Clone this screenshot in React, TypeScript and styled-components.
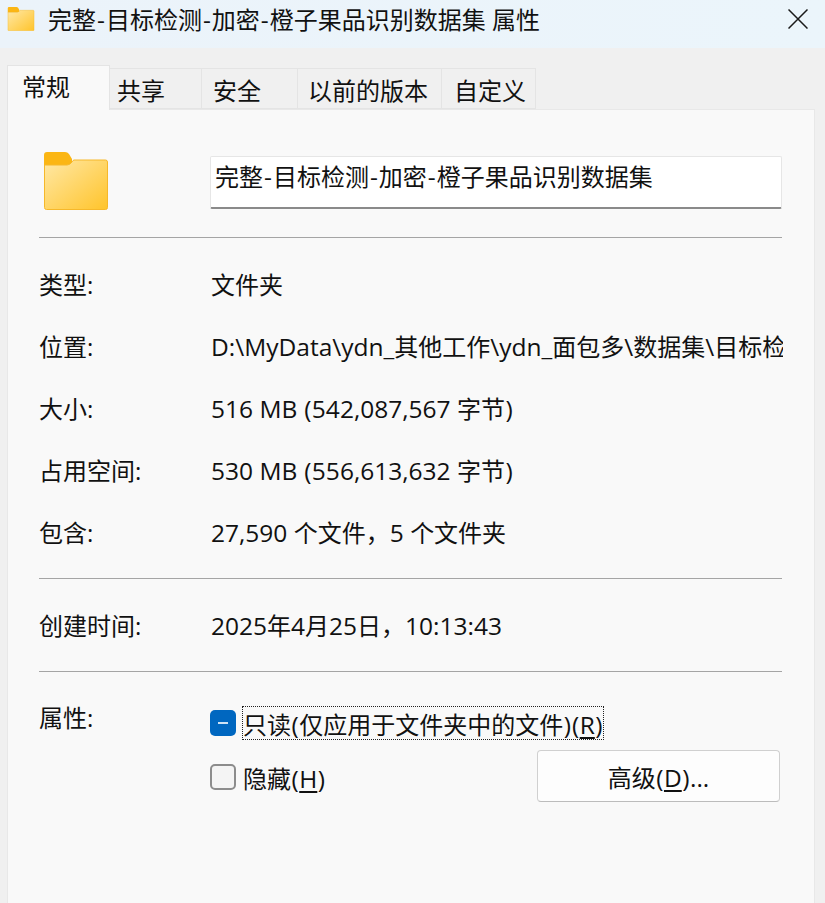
import React from "react";
import styled, { createGlobalStyle } from "styled-components";

const Global = createGlobalStyle`
  html, body { margin: 0; padding: 0; background: #f0f0f0; }
  body { font-family: "Open Sans", "Noto Sans CJK SC", sans-serif; color: #111; overflow: hidden; }
  * { box-sizing: border-box; }
`;

const Window = styled.div`
  width: 825px;
  height: 903px;
  display: flex;
  flex-direction: column;
  background: #f0f0f0;
  overflow: hidden;
`;

const TitleBar = styled.div`
  height: 48px;
  flex: none;
  display: flex;
  align-items: center;
  padding: 0 17px 8px 7px;
  background: linear-gradient(90deg, #ebf3fa, #ebf5fb);
  font-size: 24px;
  line-height: 40px;
`;

const SmallFolder = styled.div`
  margin-top: -3px;
`;

const TitleText = styled.span`
  margin-left: 13px;
  flex: 1;
  white-space: nowrap;
`;

const CloseSlot = styled.div`
  margin-top: -2px;
`;

const Tabs = styled.div`
  display: flex;
  align-items: flex-end;
  height: 61px;
  flex: none;
  padding: 0 0 0 7px;
  position: relative;
  z-index: 1;
`;

const Tab = styled.div<{ $w: number; $pad: number; $active?: boolean }>`
  width: ${(p) => p.$w}px;
  height: ${(p) => (p.$active ? 45 : 41)}px;
  margin-bottom: ${(p) => (p.$active ? -1 : 0)}px;
  padding-left: ${(p) => p.$pad}px;
  padding-top: ${(p) => (p.$active ? 0 : 1)}px;
  background: ${(p) => (p.$active ? "#f9f9f9" : "#f0f0f0")};
  border: 1px solid #e4e4e4;
  border-left: ${(p) => (p.$active ? "1px solid #e4e4e4" : "none")};
  border-bottom: ${(p) => (p.$active ? "none" : "1px solid #e4e4e4")};
  font-size: 24px;
  line-height: 42px;
  white-space: nowrap;
  display: flex;
`;

const Panel = styled.div`
  width: 808px;
  margin-left: 7px;
  flex: 1;
  background: #f9f9f9;
  border: 1px solid #e8e8e8;
  border-bottom: none;
  padding: 46px 32px 0 31px;
`;

const NameRow = styled.div`
  display: flex;
  align-items: flex-start;
  padding-left: 5px;
  height: 81px;
`;

const FolderSlot = styled.div`
  width: 166px;
  flex: none;
  margin-top: -4px;
`;

const NameInput = styled.div`
  width: 573px;
  height: 53px;
  background: #fff;
  border: 1px solid #e6e6e6;
  border-bottom: 2px solid #8a8a8a;
  border-radius: 2px;
  padding-left: 4px;
  font-size: 24px;
  line-height: 39px;
  white-space: nowrap;
`;

const Divider = styled.div`
  width: 743px;
  height: 1px;
  background: #a5a5a5;
`;

const InfoList = styled.div`
  display: grid;
  grid-template-columns: 172px 572px;
  grid-auto-rows: 62px;
  padding-top: 16px;
  height: 340px;
`;

const Label = styled.div`
  font-size: 24px;
  line-height: 62px;
  white-space: nowrap;
`;

const Value = styled.div`
  font-size: 24px;
  line-height: 62px;
  white-space: nowrap;
  overflow: hidden;
`;

const DateRow = styled.div`
  display: grid;
  grid-template-columns: 172px 572px;
  height: 92px;
  padding-top: 16px;
`;

const AttrSection = styled.div`
  display: grid;
  grid-template-columns: 172px 572px;
  padding-top: 17px;
`;

const AttrLabel = styled.div`
  font-size: 24px;
  line-height: 62px;
  margin-top: -2px;
`;

const AttrColumn = styled.div`
  display: flex;
  flex-direction: column;
  padding-top: 18px;
`;

const CheckRow = styled.div<{ $h: number; $top?: number }>`
  display: flex;
  align-items: center;
  height: ${(p) => p.$h}px;
  padding-top: ${(p) => p.$top ?? 0}px;
  gap: 7px;
  font-size: 24px;
  white-space: nowrap;
`;

const Check = styled.div<{ $on?: boolean }>`
  width: 26px;
  height: 26px;
  flex: none;
  margin-left: -1px;
  border-radius: 5px;
  background: ${(p) => (p.$on ? "#0067c0" : "#f4f4f4")};
  border: ${(p) => (p.$on ? "none" : "2px solid #8c8c8c")};
  display: flex;
  align-items: center;
  justify-content: center;
`;

const Dash = styled.span`
  width: 10px;
  height: 2px;
  background: #cfe3f5;
`;

const FocusLabel = styled.span`
  outline: 1px dotted #222;
  line-height: 35px;
  display: inline-block;
  height: 32px;
`;

const Latin = styled.span`
  font-size: 24.5px;
`;

const Hyphen = styled.span`
  font-size: 24.5px;
  margin: 0 1px;
`;

const Paren = styled.span`
  font-size: 24.5px;
  margin: 0 0.5px;
`;

const Mnemonic = styled.span`
  font-size: 24.5px;
  text-decoration: underline;
  text-underline-offset: 3px;
  text-decoration-thickness: 1.5px;
`;

const SecondRow = styled.div`
  display: flex;
  align-items: center;
  justify-content: space-between;
  padding-right: 3px;
  margin-top: 11px;
`;

const Button = styled.div`
  width: 243px;
  height: 52px;
  background: #fdfdfd;
  border: 1px solid #d0d0d0;
  border-bottom-color: #bcbcbc;
  border-radius: 4px;
  display: flex;
  align-items: center;
  justify-content: center;
  font-size: 24px;
  white-space: nowrap;
`;

// Mixed CJK / Latin run: the Latin glyphs sit slightly larger than the CJK ones.
const Txt = ({ children }: { children: string }) => (
  <>
    {children.split(/([-()]|[\x20-\x27\x2a-\x2c\x2e-\x7e]+)/).map((part, i) => {
      if (!part) return null;
      if (part === "-") return <Hyphen key={i}>-</Hyphen>;
      if (part === "(" || part === ")") return <Paren key={i}>{part}</Paren>;
      if (/^[\x20-\x7e]+$/.test(part)) return <Latin key={i}>{part}</Latin>;
      return <React.Fragment key={i}>{part}</React.Fragment>;
    })}
  </>
);

const Folder = ({ w, h, id }: { w: number; h: number; id: string }) => (
  <svg width={w} height={h} viewBox="0 0 64 58" style={{ display: "block" }}>
    <defs>
      <linearGradient id={id} x1="0" y1="0" x2="1" y2="1">
        <stop offset="0" stopColor="#ffe8a6" />
        <stop offset="1" stopColor="#ffc42b" />
      </linearGradient>
    </defs>
    <path d="M0 3a3 3 0 0 1 3-3h18a5 5 0 0 1 4 2l3 5v5q-2 1-5 1H0z" fill="#fbb614" />
    <path
      d="M0.5 13H23q3 0 5-3q1-2 2-2H61.5a2 2 0 0 1 2 2V55.500a2 2 0 0 1-2 2H2.500a2 2 0 0 1-2-2z"
      fill={`url(#${id})`}
      stroke="#f6b82a"
      strokeWidth="1"
    />
  </svg>
);

const Close = () => (
  <svg width="20" height="20" viewBox="0 0 20 20" style={{ display: "block" }}>
    <path d="M0.5 0.5L19.500 19.500M19.500 0.5L0.5 19.500" stroke="#1a1a1a" strokeWidth="1.500" fill="none" />
  </svg>
);

const rows: [string, string][] = [
  ["类型:", "文件夹"],
  ["位置:", "D:\\MyData\\ydn_其他工作\\ydn_面包多\\数据集\\目标检测"],
  ["大小:", "516 MB (542,087,567 字节)"],
  ["占用空间:", "530 MB (556,613,632 字节)"],
  ["包含:", "27,590 个文件，5 个文件夹"],
];

const tabs: { t: string; w: number; pad: number; active?: boolean }[] = [
  { t: "常规", w: 103, pad: 14, active: true },
  { t: "共享", w: 92, pad: 7 },
  { t: "安全", w: 96, pad: 11 },
  { t: "以前的版本", w: 144, pad: 10 },
  { t: "自定义", w: 94, pad: 12 },
];

export default function App() {
  return (
    <Window>
      <Global />
      <TitleBar>
        <SmallFolder><Folder w={28} h={24} id="folderSmall" /></SmallFolder>
        <TitleText><Txt>完整-目标检测-加密-橙子果品识别数据集 属性</Txt></TitleText>
        <CloseSlot><Close /></CloseSlot>
      </TitleBar>
      <Tabs>
        {tabs.map((tab) => (
          <Tab key={tab.t} $w={tab.w} $pad={tab.pad} $active={tab.active}>{tab.t}</Tab>
        ))}
      </Tabs>
      <Panel>
        <NameRow>
          <FolderSlot><Folder w={64} h={58} id="folderLarge" /></FolderSlot>
          <NameInput><Txt>完整-目标检测-加密-橙子果品识别数据集</Txt></NameInput>
        </NameRow>
        <Divider />
        <InfoList>
          {rows.map(([k, v]) => (
            <React.Fragment key={k}>
              <Label>{k}</Label>
              <Value><Txt>{v}</Txt></Value>
            </React.Fragment>
          ))}
        </InfoList>
        <Divider />
        <DateRow>
          <Label>创建时间:</Label>
          <Value><Txt>2025年4月25日，10:13:43</Txt></Value>
        </DateRow>
        <Divider />
        <AttrSection>
          <AttrLabel>属性:</AttrLabel>
          <AttrColumn>
            <CheckRow $h={32}>
              <Check $on><Dash /></Check>
              <FocusLabel>
                <Txt>只读(仅应用于文件夹中的文件)(</Txt><Mnemonic>R</Mnemonic><Txt>)</Txt>
              </FocusLabel>
            </CheckRow>
            <SecondRow>
              <CheckRow $h={52} $top={2}>
                <Check />
                <span><Txt>隐藏(</Txt><Mnemonic>H</Mnemonic><Txt>)</Txt></span>
              </CheckRow>
              <Button>
                <span><Txt>高级(</Txt><Mnemonic>D</Mnemonic><Txt>)...</Txt></span>
              </Button>
            </SecondRow>
          </AttrColumn>
        </AttrSection>
      </Panel>
    </Window>
  );
}
